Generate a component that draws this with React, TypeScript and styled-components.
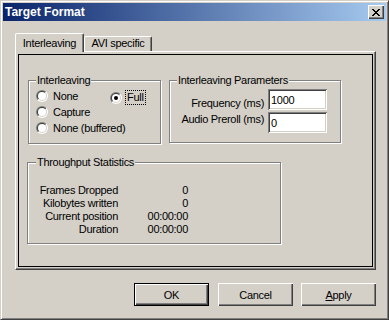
import { Fragment } from 'react';
import styled, { createGlobalStyle } from 'styled-components';

const GlobalStyle = createGlobalStyle`
  html, body {
    margin: 0;
    padding: 0;
    background: #d4d0c8;
  }
`

const Window = styled.div`
  box-sizing: border-box;
  width: 389px;
  height: 320px;
  display: flex;
  flex-direction: column;
  padding: 2px;
  background: #d4d0c8;
  border: 1px solid;
  border-color: #d4d0c8 #404040 #404040 #d4d0c8;
  box-shadow: inset 1px 1px 0 #fff, inset -1px -1px 0 #808080;
  color: #000;
  font-family: "Liberation Sans", Arial, sans-serif;
  font-size: 11px;
  letter-spacing: -0.3px;
`
const TitleBar = styled.div`
  height: 18px;
  flex: none;
  display: flex;
  align-items: center;
  justify-content: space-between;
  padding: 0 2px;
  background: linear-gradient(to right, #0a246a, #a6caf0);
`
const Title = styled.span`
  color: #fff;
  font-weight: bold;
  font-size: 12px;
  letter-spacing: 0;
`
const CloseButton = styled.button`
  box-sizing: border-box;
  width: 16px;
  height: 14px;
  padding: 0;
  border: none;
  background: #d4d0c8;
  box-shadow: inset 1px 1px 0 #fff, inset -1px -1px 0 #404040, inset -2px -2px 0 #808080;
  display: flex;
  align-items: center;
  justify-content: center;
`
const Body = styled.div`
  flex: 1;
  display: flex;
  flex-direction: column;
  padding: 12px 10px 0 12px;
`
const TabRow = styled.div`
  display: flex;
  align-items: flex-start;
  height: 18px;
`
const Tab = styled.div<{ $active?: boolean }>`
  box-sizing: border-box;
  position: relative;
  z-index: ${p => p.$active ? 1 : 0};
  width: ${p => p.$active ? 69 : 68}px;
  height: ${p => p.$active ? 19 : 15}px;
  margin-top: ${p => p.$active ? 0 : 3}px;
  padding-top: ${p => p.$active ? 3 : 0}px;
  line-height: 13px;
  text-align: center;
  white-space: nowrap;
  background: #d4d0c8;
  border-top: 1px solid #fff;
  border-left: 1px solid #fff;
  border-right: 1px solid #404040;
  border-radius: 2px 2px 0 0;
  box-shadow: inset -1px 0 0 #808080;
`
const Pane = styled.div`
  border: 1px solid;
  border-color: #fff #404040 #404040 #fff;
  box-shadow: inset -1px -1px 0 #808080;
  padding: 2px;
`
const Page = styled.div`
  box-sizing: border-box;
  height: 213px;
  border: 1px solid #000;
  padding: 25px 0 0 9px;
`
const GroupRow = styled.div`
  display: flex;
  gap: 8px;
`
const Group = styled.div<{ $w: number; $h: number }>`
  position: relative;
  box-sizing: border-box;
  width: ${p => p.$w}px;
  height: ${p => p.$h}px;
  border: 1px solid #808080;
  box-shadow: 1px 1px 0 #fff, inset 1px 1px 0 #fff;
`
const StatsGroup = styled(Group)`
  margin: 18px 0 0 -1px;
`
const Caption = styled.span<{ $left?: number }>`
  position: absolute;
  top: -7px;
  left: ${p => p.$left ?? 7}px;
  padding: 0 1px;
  line-height: 13px;
  white-space: nowrap;
  background: #d4d0c8;
`
const RadioGrid = styled.div`
  display: grid;
  grid-template-columns: 74px auto;
  grid-auto-rows: 16px;
  padding: 7px 0 0 7px;
`
const RadioItem = styled.label<{ $drop?: number }>`
  display: flex;
  align-items: center;
  gap: 5px;
  white-space: nowrap;
  margin-top: ${p => p.$drop ?? 0}px;
`
const RadioOuter = styled.span`
  box-sizing: border-box;
  flex: none;
  width: 12px;
  height: 12px;
  padding: 1px;
  border-radius: 50%;
  background: linear-gradient(135deg, #808080 50%, #fff 50%);
`
const RadioInner = styled.span`
  box-sizing: border-box;
  display: block;
  width: 10px;
  height: 10px;
  padding: 1px;
  border-radius: 50%;
  background: linear-gradient(135deg, #404040 50%, #d4d0c8 50%);
`
const RadioWell = styled.span<{ $checked?: boolean }>`
  display: flex;
  align-items: center;
  justify-content: center;
  width: 8px;
  height: 8px;
  border-radius: 50%;
  background: #fff;
  &::after {
    content: '';
    display: ${p => p.$checked ? 'block' : 'none'};
    width: 4px;
    height: 4px;
    border-radius: 50%;
    background: #000;
  }
`
const FocusText = styled.span`
  margin-left: -2px;
  padding: 0 1px;
  line-height: 13px;
  border: 1px dotted #000;
`
const ParamGrid = styled.div`
  display: grid;
  grid-template-columns: 1fr 59px;
  grid-auto-rows: 21px;
  column-gap: 4px;
  row-gap: 2px;
  padding: 8px 13px 0 0;
`
const ParamLabel = styled.span<{ $bottom?: boolean }>`
  align-self: ${p => p.$bottom ? 'end' : 'start'};
  padding-top: ${p => p.$bottom ? 0 : 1}px;
  line-height: 13px;
  text-align: right;
  white-space: nowrap;
`
const Field = styled.input`
  box-sizing: border-box;
  width: 59px;
  height: 21px;
  margin: 0;
  padding: 0 2px 0 3px;
  border: none;
  outline: none;
  background: #fff;
  font: inherit;
  letter-spacing: inherit;
  color: #000;
  box-shadow: inset 1px 1px 0 #808080, inset -1px -1px 0 #fff,
    inset 2px 2px 0 #404040, inset -2px -2px 0 #d4d0c8;
`
const StatsGrid = styled.div`
  display: grid;
  grid-template-columns: 90px 70px;
  grid-auto-rows: 13px;
  padding-top: 21px;
  text-align: right;
  white-space: nowrap;
`
const ButtonRow = styled.div`
  display: flex;
  justify-content: flex-end;
  gap: 8px;
  margin-top: 13px;
`
const Button = styled.button<{ $default?: boolean }>`
  box-sizing: border-box;
  width: 75px;
  height: 23px;
  padding: 0;
  margin-right: ${p => p.$default ? 1 : 0}px;
  background: #d4d0c8;
  border: ${p => p.$default ? '1px solid #000' : 'none'};
  box-shadow: inset 1px 1px 0 #fff, inset -1px -1px 0 #404040, inset -2px -2px 0 #808080;
  font: inherit;
  letter-spacing: inherit;
  color: #000;
`

const Radio = ({ label, checked, focused, drop }: { label: string; checked?: boolean; focused?: boolean; drop?: number }) => (
  <RadioItem $drop={drop}>
    <RadioOuter>
      <RadioInner>
        <RadioWell $checked={checked} />
      </RadioInner>
    </RadioOuter>
    {focused ? <FocusText>{label}</FocusText> : <span>{label}</span>}
  </RadioItem>
)

const stats = [
  ['Frames Dropped', '0'],
  ['Kilobytes written', '0'],
  ['Current position', '00:00:00'],
  ['Duration', '00:00:00'],
]

export default function App() {
  return (
    <>
      <GlobalStyle />
      <Window>
        <TitleBar>
          <Title>Target Format</Title>
          <CloseButton aria-label="Close">
            <svg width="8" height="7" viewBox="0 0 8 7" shapeRendering="crispEdges">
              <path
                fill="#000"
                d="M0 0h2v1H0z M6 0h2v1H6z M1 1h2v1H1z M5 1h2v1H5z M2 2h4v1H2z M3 3h2v1H3z M2 4h4v1H2z M1 5h2v1H1z M5 5h2v1H5z M0 6h2v1H0z M6 6h2v1H6z"
              />
            </svg>
          </CloseButton>
        </TitleBar>
        <Body>
          <TabRow>
            <Tab $active>Interleaving</Tab>
            <Tab>AVI specific</Tab>
          </TabRow>
          <Pane>
            <Page>
              <GroupRow>
                <Group $w={133} $h={64}>
                  <Caption>Interleaving</Caption>
                  <RadioGrid>
                    <Radio label="None" />
                    <Radio label="Full" checked focused drop={3} />
                    <Radio label="Capture" />
                    <span />
                    <Radio label="None (buffered)" />
                  </RadioGrid>
                </Group>
                <Group $w={172} $h={63}>
                  <Caption>Interleaving Parameters</Caption>
                  <ParamGrid>
                    <ParamLabel $bottom>Frequency (ms)</ParamLabel>
                    <Field readOnly value="1000" />
                    <ParamLabel>Audio Preroll (ms)</ParamLabel>
                    <Field readOnly value="0" />
                  </ParamGrid>
                </Group>
              </GroupRow>
              <StatsGroup $w={254} $h={82}>
                <Caption $left={8}>Throughput Statistics</Caption>
                <StatsGrid>
                  {stats.map(([k, v]) => (
                    <Fragment key={k}>
                      <span>{k}</span>
                      <span>{v}</span>
                    </Fragment>
                  ))}
                </StatsGrid>
              </StatsGroup>
            </Page>
          </Pane>
          <ButtonRow>
            <Button $default>OK</Button>
            <Button>Cancel</Button>
            <Button><u>A</u>pply</Button>
          </ButtonRow>
        </Body>
      </Window>
    </>
  )
}
